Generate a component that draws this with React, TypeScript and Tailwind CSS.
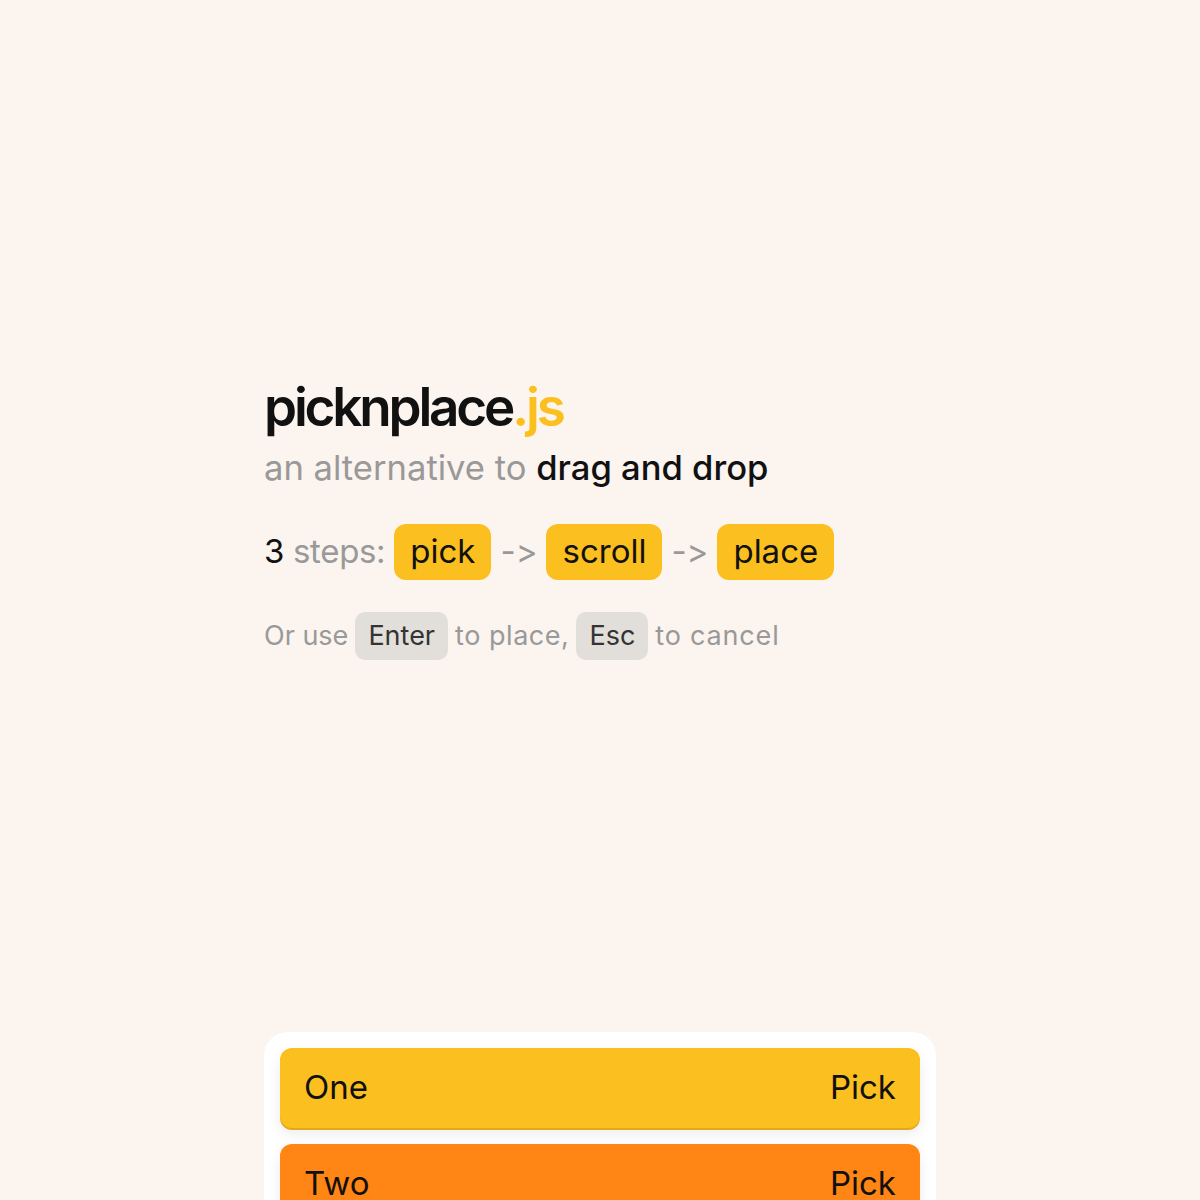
import React from "react";

const font = { fontFamily: "Inter, 'Noto Sans', sans-serif" };

function Pill({ children }: { children: React.ReactNode }) {
  return (
    <span className="inline-flex items-center h-[56px] px-[16px] rounded-[12px] bg-[#fbbf1f] text-[#111111]">
      {children}
    </span>
  );
}

function Key({ children }: { children: React.ReactNode }) {
  return (
    <span className="inline-flex items-center h-[48px] px-[13px] rounded-[10px] bg-[#e2dfda] text-[#333333]">
      {children}
    </span>
  );
}

function Item({ label, color, edge }: { label: string; color: string; edge: string }) {
  return (
    <div
      className={`flex items-center justify-between h-[80px] px-[24px] rounded-[12px] text-[33px] text-[#111111] ${color} ${edge}`}
    >
      <span>{label}</span>
      <span>Pick</span>
    </div>
  );
}

export default function App() {
  return (
    <div className="min-h-[1200px] bg-[#fcf4ef] overflow-hidden [font-variant-ligatures:none]" style={font}>
      <div className="w-[672px] mx-auto pt-[375px]">
        <h1 className="text-[53px] leading-[64px] font-semibold tracking-[-0.06em] text-[#111111]">
          picknplace<span className="text-[#fbbf1f]">.js</span>
        </h1>
        <p className="mt-[6px] text-[34.6px] leading-[44px] text-[#999999]">
          an alternative to <span className="text-[#111111] font-medium">drag and drop</span>
        </p>
        <div className="mt-[35px] flex items-center gap-[9px] text-[33px] text-[#999999]">
          <span className="tracking-[-0.01em]">
            <span className="text-[#111111]">3</span> steps:
          </span>
          <Pill>pick</Pill>
          <span>-&gt;</span>
          <Pill>scroll</Pill>
          <span>-&gt;</span>
          <Pill>place</Pill>
        </div>
        <div className="mt-[32px] flex items-center gap-[7px] text-[27px] text-[#999999]">
          <span>Or use</span>
          <Key>Enter</Key>
          <span className="tracking-[0.02em]">to place,</span>
          <Key>Esc</Key>
          <span className="tracking-[0.03em]">to cancel</span>
        </div>
        <div className="mt-[372px] bg-white rounded-[24px] p-[16px] flex flex-col gap-[16px]">
          <Item
            label="One"
            color="bg-[#fbbf1f]"
            edge="shadow-[0_2px_0_#e2a81a,0_6px_14px_rgba(0,0,0,0.08)]"
          />
          <Item
            label="Two"
            color="bg-[#ff8514]"
            edge="shadow-[0_2px_0_#e07210,0_6px_14px_rgba(0,0,0,0.08)]"
          />
          <Item
            label="Three"
            color="bg-[#fbbf1f]"
            edge="shadow-[0_2px_0_#e2a81a,0_6px_14px_rgba(0,0,0,0.08)]"
          />
        </div>
      </div>
    </div>
  );
}
